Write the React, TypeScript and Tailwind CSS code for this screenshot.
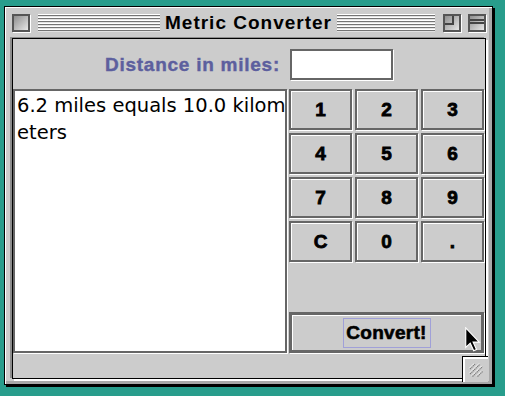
import React from "react";

const keys = ["1", "2", "3", "4", "5", "6", "7", "8", "9", "C", "0", "."];

const stripes =
  "h-[18px] bg-[image:repeating-linear-gradient(to_bottom,#ffffff_0px,#ffffff_1px,#747474_1px,#747474_2px,#e2e2e2_2px,#e2e2e2_3px)]";

const TitleBox = ({ children }: { children?: React.ReactNode }) => (
  <div className="relative w-[18px] h-[18px] shrink-0 border-2 border-[#555555] bg-linear-to-br from-[#8f8f8f] to-[#e8e8e8] shadow-[1px_1px_0_#ffffff]">
    {children}
  </div>
);

const GrowIcon = () => (
  <svg width="16" height="16" viewBox="0 0 16 16">
    {[
      [4.5, 2.5],
      [7, 5],
      [9.5, 5],
      [12, 2.5],
    ].map(([c, l]) => (
      <g key={c}>
        <line x1={c - l - 0.7} y1={c + l - 0.7} x2={c + l - 0.7} y2={c - l - 0.7} stroke="#ffffff" strokeWidth="1" />
        <line x1={c - l} y1={c + l} x2={c + l} y2={c - l} stroke="#7a7a7a" strokeWidth="1.1" strokeDasharray="1.4 0.6" />
      </g>
    ))}
  </svg>
);

const Cursor = () => (
  <svg width="16" height="25" viewBox="0 0 11 17" className="absolute left-[465px] top-[327px]">
    <path d="M0.5 0.5 L0.5 14 L3.6 11 L6 16.3 L7.9 15.4 L5.6 10.3 L9.8 10.3 Z" fill="#000000" stroke="#ffffff" strokeWidth="0.8" />
  </svg>
);

export default function App() {
  return (
    <div className="relative w-[505px] h-[396px] overflow-hidden bg-[#289d8c] pt-[6px] pl-[4px] font-['Liberation_Sans',Arial,sans-serif]">
      <div className="w-[489px] h-[379px] border border-black bg-[#cccccc] shadow-[2px_2px_0_#000000,inset_1px_1px_0_#ffffff,inset_-3px_-3px_0_#a8a8a8] flex flex-col pl-[7px] pr-[6px]">
        {/* title bar */}
        <div className="h-[31px] flex items-center shrink-0">
          <TitleBox />
          <div className={`${stripes} w-[122px] ml-[8px] shrink-0`} />
          <div className="shrink-0 mx-[5px] text-[19px] font-bold tracking-[1px] text-black leading-none whitespace-nowrap">
            Metric Converter
          </div>
          <div className={`${stripes} flex-1`} />
          <div className="ml-[8px]">
            <TitleBox>
              <div className="absolute left-0 top-0 w-[9px] h-[9px] border-r-2 border-b-2 border-[#444444]" />
            </TitleBox>
          </div>
          <div className="ml-[7px]">
            <TitleBox>
              <div className="mt-[3px] h-[5px] border-t-2 border-b-2 border-[#444444]" />
            </TitleBox>
          </div>
        </div>

        {/* content */}
        <div className="relative h-[341px] border border-black bg-[#cccccc] shadow-[-2px_-1px_0_#8c8c8c,2px_2px_0_#ffffff] flex flex-col">
          <div className="flex items-start pt-[10px] h-[50px]">
            <div className="w-[267px] h-[31px] flex items-center justify-end text-[19px] font-bold tracking-[0.75px] text-[#5d5f9e] leading-none whitespace-nowrap [-webkit-text-stroke:0.4px_#5d5f9e]">
              Distance in miles:
            </div>
            <div className="ml-[10px] w-[103px] h-[31px] bg-white border-2 border-[#666666] shadow-[1px_1px_0_#ffffff]" />
          </div>

          <div className="flex gap-[2px] h-[264px]">
            <div className="w-[274px] h-full bg-white border-2 border-[#666666] shadow-[1px_1px_0_#ffffff] pt-[1px] pl-[2px] font-['DejaVu_Sans',sans-serif] text-[19.5px] leading-[27px] text-black whitespace-nowrap overflow-hidden">
              <div>6.2 miles equals 10.0 kilom</div>
              <div>eters</div>
            </div>

            <div className="w-[195px] flex flex-col">
              <div className="grid grid-cols-3 gap-[3px]">
                {keys.map((k) => (
                  <div
                    key={k}
                    className="h-[41px] flex items-center justify-center bg-[#cccccc] border-2 border-[#666666] shadow-[inset_1px_1px_0_#ffffff,1px_1px_0_#ffffff] text-[19px] font-bold text-black leading-none [-webkit-text-stroke:0.8px_#000]"
                  >
                    {k}
                  </div>
                ))}
              </div>
              <div className="mt-auto h-[41px] flex items-center justify-center bg-[#cccccc] border-[3px] border-[#666666] shadow-[inset_1px_1px_0_#ffffff,1px_1px_0_#ffffff]">
                <span className="w-[88px] h-[30px] flex items-center justify-center border border-[#a0a0d8] text-[19px] font-bold tracking-[0.3px] text-black leading-none [-webkit-text-stroke:0.6px_#000]">
                  Convert!
                </span>
              </div>
            </div>
          </div>

          {/* grow box notch */}
          <div className="absolute left-[449px] top-[317px] w-[26px] h-[26px] bg-[#cccccc] border-l border-t border-black shadow-[inset_2px_2px_0_#ffffff] pl-[5px] pt-[5px]">
            <GrowIcon />
          </div>
        </div>
      </div>
      <Cursor />
    </div>
  );
}
